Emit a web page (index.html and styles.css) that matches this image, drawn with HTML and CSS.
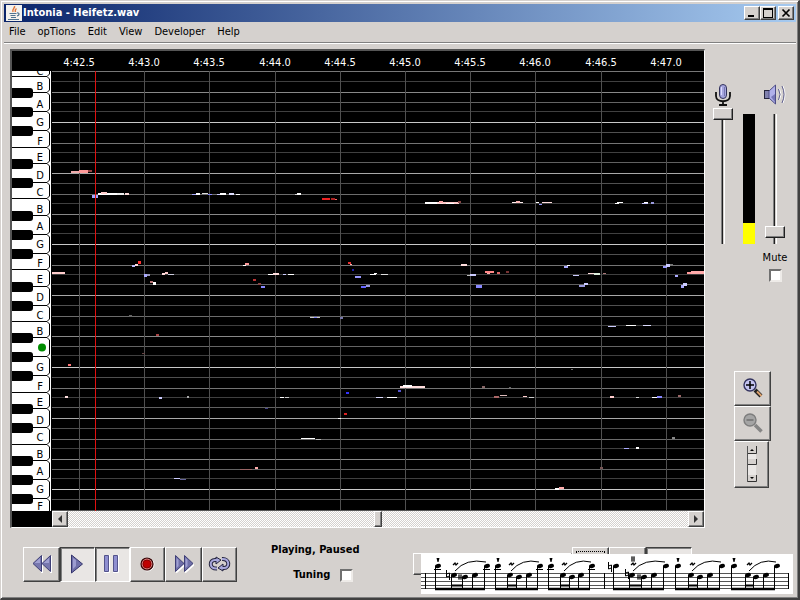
FILE: index.html
```
<!DOCTYPE html>
<html lang="en">
<head>
    <meta charset="UTF-8">
    <meta name="viewport" content="width=device-width, initial-scale=1.0">
    <title>Intonia - Heifetz.wav</title>
    <link rel="stylesheet" href="styles.css">
</head>
<body>
    <div class="window">
        <header class="titlebar">
            <svg class="app-icon" width="16" height="16" viewBox="0 0 16 16">
                <rect width="16" height="16" fill="#f4f2ee"/>
                <path d="M8.5 1c1 2-3 3-1.5 6M10.5 3.5c-2 1.5-1.5 2-1 3.5" fill="none" stroke="#e0763a" stroke-width="1.5"/>
                <path d="M3.5 8.5h7M4.5 10.5h5M11 8c3-.5 2.5 2.5 0 3M5 12.5h5M2 14.5h11" fill="none" stroke="#4f7390" stroke-width="1.2"/>
            </svg>
            <h1>Intonia - Heifetz.wav</h1>
            <div class="window-buttons">
                <button type="button" aria-label="Minimize"><svg width="12" height="10"><path d="M2 7h6v2h-6z"/></svg></button>
                <button type="button" aria-label="Maximize"><svg width="12" height="10"><path d="M1 0h10v10h-10zM2 2v7h8v-7z" fill-rule="evenodd"/></svg></button>
                <button type="button" class="close" aria-label="Close"><svg width="12" height="10"><path d="M2.5 1.5l7 7M9.5 1.5l-7 7" stroke="#000" stroke-width="1.7"/></svg></button>
            </div>
        </header>

        <nav class="menubar">
            <button type="button">File</button>
            <button type="button">opTions</button>
            <button type="button">Edit</button>
            <button type="button">View</button>
            <button type="button">Developer</button>
            <button type="button">Help</button>
        </nav>

        <main class="workspace">
            <section class="editor">
                <svg class="roll" id="roll" width="100%" height="460"></svg>
                <div class="scrollbar">
                    <button type="button" aria-label="Scroll left"><svg width="10" height="10"><path d="M7 1v8L3 5z" fill="#333"/></svg></button>
                    <input type="range" min="0" max="100" value="50" aria-label="Position">
                    <button type="button" aria-label="Scroll right"><svg width="10" height="10"><path d="M3 1v8l4-4z" fill="#333"/></svg></button>
                </div>
            </section>

            <aside class="side">
                <div class="levels">
                    <div class="level">
                        <svg width="18" height="22" viewBox="0 0 18 22">
                            <rect x="5.5" y="0.5" width="7" height="14" rx="3.5" fill="#a6a6de" stroke="#33335c"/>
                            <path d="M7.5 3v8" stroke="#dcdcff"/>
                            <path d="M10.5 3v9" stroke="#7575b0"/>
                            <path d="M2 8v4c0 7 14 7 14 0V8M9 17v4M5 21h8" fill="none" stroke="#111" stroke-width="1.8"/>
                        </svg>
                        <input type="range" min="0" max="100" value="100" aria-label="Microphone level">
                    </div>
                    <div class="meter"><div class="meter-fill" style="height: 16%"></div></div>
                    <div class="level">
                        <svg width="22" height="22" viewBox="0 0 22 22">
                            <rect x="0.5" y="6.5" width="5" height="8" fill="#8080ad" stroke="#24243c"/>
                            <path d="M5 7L11.5 1v19L5 14z" fill="#b0b0ea" stroke="#4d4d86"/>
                            <path d="M7 13l4 5V10z" fill="#7777b8"/>
                            <path d="M15.5 5q3 5.5 0 11M19 2q4 8.5 0 17" fill="none" stroke="#fff"/>
                            <path d="M14.5 5q3 5.5 0 11M18 2q4 8.5 0 17" fill="none" stroke="#60608f"/>
                        </svg>
                        <input type="range" min="0" max="100" value="5" aria-label="Playback volume">
                        <label for="mute">Mute</label>
                        <input type="checkbox" id="mute">
                    </div>
                </div>

                <div class="zoom">
                    <button type="button" aria-label="Zoom in">
                        <svg width="20" height="20" viewBox="0 0 20 20">
                            <path d="M12 12l6 6" stroke="#222" stroke-width="4"/>
                            <path d="M14 13.5l4.5 4.5" stroke="#dda26e" stroke-width="2"/>
                            <circle cx="7" cy="7" r="6" fill="#c4c4f0" stroke="#33335f" stroke-width="1.4"/>
                            <path d="M7 3v8M3 7h8" stroke="#000" stroke-width="1.5"/>
                        </svg>
                    </button>
                    <button type="button" aria-label="Zoom out" disabled>
                        <svg width="20" height="20" viewBox="0 0 20 20">
                            <path d="M12 12l6.5 6.5" stroke="#858585" stroke-width="3.5"/>
                            <circle cx="7" cy="7" r="6" fill="#a5a5a5" stroke="#7d7d7d" stroke-width="1.4"/>
                            <path d="M3.5 7h7" stroke="#707070" stroke-width="1.5"/>
                        </svg>
                    </button>
                    <button type="button" class="tall" aria-label="Show scrollbar">
                        <svg width="10" height="36" viewBox="0 0 10 36">
                            <rect x="1" width="8" height="36" fill="#eae7e5"/>
                            <path d="M.5 0v36" stroke="#555"/>
                            <path d="M1 0h8v7H1zM1 13h8v6H1zM1 29h8v7H1z" fill="#d6d2cf"/>
                            <path d="M1 7.5h8.5V0M1 18.5h8.5V13M1 35.5h8.5V29" fill="none" stroke="#333"/>
                            <path d="M3 5h4L5 3zM3 31h4l-2 2z"/>
                        </svg>
                    </button>
                </div>
            </aside>
        </main>

        <footer class="transport">
            <div class="buttons">
                <button type="button" class="wide" aria-label="Rewind">
                    <svg width="20" height="20" viewBox="0 0 20 20">
                        <path d="M10 2v17M19 2v17" stroke="#fff" stroke-width="2"/>
                        <path d="M9.5 1.5v16L1 9.5zM18.5 1.5v16L10 9.5z" fill="#7777ae" stroke="#3e3e76"/>
                        <path d="M2.5 9L8 4v5zM11.5 9L17 4v5z" fill="#a0a0d2"/>
                    </svg>
                </button>
                <button type="button" class="pressed" aria-label="Play">
                    <svg width="20" height="20" viewBox="0 0 20 20">
                        <path d="M3.5 1v18L14.5 10z" fill="#6f6fa8" stroke="#34346c"/>
                        <path d="M5 4v11l3-3V6z" fill="#9c9cd0"/>
                    </svg>
                </button>
                <button type="button" class="pressed" aria-label="Pause">
                    <svg width="20" height="20" viewBox="0 0 20 20">
                        <path d="M1.5 1.5h4v16h-4zM10.5 1.5h4v16h-4z" fill="#8f8fd0" stroke="#54548c"/>
                        <path d="M1 18.5h5.5V1M10 18.5h5.5V1" fill="none" stroke="#fff"/>
                    </svg>
                </button>
                <button type="button" aria-label="Record">
                    <svg width="20" height="20" viewBox="0 0 20 20">
                        <circle cx="9.5" cy="10.5" r="6.5" fill="none" stroke="#fff"/>
                        <circle cx="9" cy="10" r="6" fill="#d27878" stroke="#300" stroke-width="1.2"/>
                        <circle cx="9" cy="10" r="4" fill="#c00000" stroke="#8a0000"/>
                    </svg>
                </button>
                <button type="button" class="wide" aria-label="Fast forward">
                    <svg width="20" height="20" viewBox="0 0 20 20">
                        <path d="M2 18.5L11 10.5M11 18.5L20 10.5" stroke="#fff" stroke-width="2"/>
                        <path d="M1.5 1.5v16L10 9.5zM10.5 1.5v16L19 9.5z" fill="#6f6fa8" stroke="#3e3e76"/>
                        <path d="M2.5 4v10l2-2V6zM11.5 4v10l2-2V6z" fill="#a0a0d2"/>
                    </svg>
                </button>
                <button type="button" aria-label="Loop">
                    <svg width="24" height="20" viewBox="0 0 24 20">
                        <path d="M9 14.5C1 15 1 6 7 6h3M14 5c8-.5 8 9 2 9h-3" fill="none" stroke="#24243e" stroke-width="4"/>
                        <path d="M8 3l5 3-5 4zM15 10l-5 4 5 3z" fill="#a8a8dc" stroke="#24243e"/>
                        <path d="M9 14.5C1 15 1 6 7 6h3M14 5c8-.5 8 9 2 9h-3" fill="none" stroke="#a8a8dc" stroke-width="2"/>
                    </svg>
                </button>
            </div>

            <div class="status">
                <strong>Playing, Paused</strong>
                <div class="tuning">
                    <label for="tuning">Tuning</label>
                    <input type="checkbox" id="tuning">
                </div>
            </div>

            <div class="tools">
                <button type="button" class="long" aria-label="Tool"></button>
                <button type="button" class="focused" aria-label="Tool"></button>
                <button type="button" aria-label="Tool"></button>
                <button type="button" class="pressed" aria-label="Tool"></button>
                <svg class="score" id="score" viewBox="0 0 372 40" width="372" height="40"></svg>
            </div>
        </footer>
    </div>
    <script src="script.js"></script>
</body>
</html>
```
FILE: styles.css
```
* {
    box-sizing: border-box;
}

body {
    margin: 0;
    background: #d5d1ce;
    font-family: "DejaVu Sans Condensed", "DejaVu Sans", sans-serif;
    font-size: 11px;
    line-height: 14px;
    color: #000;
}

button {
    display: flex;
    align-items: center;
    justify-content: center;
    margin: 0;
    padding: 0;
    font: inherit;
    color: inherit;
    background: #d5d1ce;
    border: 1px solid;
    border-color: #fff #404040 #404040 #fff;
    box-shadow: inset -1px -1px #808080;
}

svg {
    display: block;
    flex: none;
}

.window {
    display: flex;
    flex-direction: column;
    min-height: 100vh;
    padding: 2px 1px 0;
    border: 1px solid;
    border-color: #d5d1ce #404040 #404040 #d5d1ce;
    border-bottom-width: 2px;
    border-right-width: 2px;
    box-shadow: inset 1px 1px #fff, inset -1px -1px #808080;
}

/* Title bar */
.titlebar {
    display: flex;
    align-items: center;
    height: 18px;
    margin: 1px 1px 0 2px;
    padding: 0 2px;
    background: linear-gradient(to right, #0a246a, #a6caf0);
}

.titlebar h1 {
    flex: 1;
    margin: 0 0 0 1px;
    font-size: 11px;
    font-weight: bold;
    color: #fff;
}

.window-buttons {
    display: flex;
}

.window-buttons button {
    width: 16px;
    height: 14px;
}

.window-buttons .close {
    margin-left: 2px;
}

/* Menu bar */
.menubar {
    display: flex;
    height: 22px;
    margin: 0 1px 0 2px;
    border-bottom: 1px solid #fff;
    box-shadow: inset 0 -1px #808080;
}

.menubar button {
    padding: 0 7px 1px 5px;
    background: none;
    border: none;
    box-shadow: none;
}

/* Pitch editor */
.workspace {
    display: flex;
    padding: 5px 0 0 8px;
}

.editor {
    flex: 1;
    min-width: 0;
    background: #000;
    border: 2px solid;
    border-color: #555 #fff #fff #555;
    border-right-width: 1px;
    border-bottom-width: 1px;
}

.roll text {
    font-size: 11px;
    text-anchor: middle;
}

.roll .time {
    fill: #fff;
}

.scrollbar {
    display: flex;
    height: 16px;
    margin-left: 40px;
}

.scrollbar button {
    width: 16px;
}

.scrollbar input {
    flex: 1;
    min-width: 0;
    height: 16px;
    margin: 0;
    appearance: none;
    background: repeating-conic-gradient(#fff 0 25%, #d5d1ce 0 50%) 0 0 / 2px 2px;
}

.scrollbar input::-webkit-slider-thumb {
    appearance: none;
    width: 8px;
    height: 16px;
    background: #d5d1ce;
    border: 1px solid;
    border-color: #fff #404040 #404040 #fff;
    box-shadow: inset -1px -1px #808080;
}

/* Level controls */
.side {
    width: 92px;
    padding: 35px 0 0 7px;
}

.levels {
    display: flex;
    gap: 9px;
}

.level {
    display: flex;
    flex-direction: column;
    align-items: center;
    width: 22px;
}

.level input[type="range"] {
    appearance: none;
    writing-mode: vertical-lr;
    direction: rtl;
    width: 22px;
    height: 136px;
    margin: 2px 0 7px;
    background: linear-gradient(to right, #808080 1px, #202020 1px 2px, #d5d1ce 2px 3px, #fff 3px) bottom / 4px 130px no-repeat;
}

.level input[type="range"]::-webkit-slider-thumb {
    appearance: none;
    width: 20px;
    height: 12px;
    background: #d5d1ce;
    border: 1px solid;
    border-color: #fff #202020 #202020 #fff;
    box-shadow: inset -1px -1px #808080;
}

input[type="checkbox"] {
    appearance: none;
    width: 13px;
    height: 13px;
    margin: 0;
    background: #fff;
    border: 2px solid;
    border-color: #707070 #eeebe8 #eeebe8 #707070;
}

.level label {
    margin-bottom: 4px;
}

.meter {
    display: flex;
    align-items: flex-end;
    width: 12px;
    height: 130px;
    margin-top: 30px;
    background: #000;
}

.meter-fill {
    width: 100%;
    background: #ff0;
}

.zoom {
    display: flex;
    flex-direction: column;
    align-items: flex-start;
    margin: 89px 0 0 22px;
}

.zoom button {
    width: 37px;
    height: 35px;
    padding-bottom: 2px;
}

.zoom .tall {
    width: 35px;
    height: 47px;
}

/* Transport */
.transport {
    display: flex;
    padding: 19px 4px 16px 21px;
}

.buttons {
    display: flex;
}

.buttons button {
    width: 35px;
    height: 35px;
    padding-bottom: 2px;
}

.buttons .wide {
    width: 37px;
}

.buttons .pressed,
.tools .pressed {
    background: #e9e6e4;
    border-color: #404040 #fff #fff #404040;
    box-shadow: inset 1px 1px #808080;
}

.status {
    display: flex;
    flex-direction: column;
    align-items: center;
    gap: 11px;
    margin: -4px 0 0 34px;
    font-weight: bold;
}

.tuning {
    display: flex;
    align-items: center;
    gap: 10px;
    padding-left: 16px;
}

.tools {
    position: relative;
    display: flex;
    align-items: flex-start;
    margin-left: auto;
    padding-right: 101px;
}

.tools button {
    width: 37px;
    height: 28px;
}

.tools .long {
    width: 159px;
    height: 22px;
    margin-top: 6px;
}

.tools .pressed {
    width: 46px;
}

.tools .focused {
    outline: 1px dotted #000;
    outline-offset: -5px;
}

/* The score floats over the tool buttons */
.score {
    position: absolute;
    right: 0;
    top: 7px;
    background: #fff;
}
```
FILE: script.js
```
const NS = 'http://www.w3.org/2000/svg';

function add(parent, tag, attrs, text) {
    const el = document.createElementNS(NS, tag);
    for (const key in attrs) el.setAttribute(key, attrs[key]);
    if (text) el.textContent = text;
    parent.appendChild(el);
    return el;
}

const TOP = 20;
const LEFT = 40;
const roll = document.getElementById('roll');

// semitone lines, one octave repeats every 122 or 123 px
const steps = [
    [0, '#c8c8c8'], [10, '#505050'], [21, '#747474'], [30, '#404040'],
    [40, '#606060'], [51, '#a8a8a8'], [61, '#505050'], [72, '#6c6c6c'],
    [81, '#404040'], [92, '#888'], [102, '#646464'], [111, '#404040']
];
[-51, 71, 193, 316, 438].forEach(base => {
    steps.forEach(([dy, color]) => {
        const y = base + dy;
        if (y <= TOP + 1 || y >= 458) return;
        add(roll, 'rect', { x: LEFT, y: y, width: '100%', height: 1, fill: color });
    });
});
add(roll, 'rect', { x: LEFT, y: TOP, width: '100%', height: 1, fill: '#777' });
add(roll, 'rect', { x: LEFT, y: 459, width: '100%', height: 1, fill: '#555' });

// time grid
['4:42.5', '4:43.0', '4:43.5', '4:44.0', '4:44.5', '4:45.0', '4:45.5', '4:46.0', '4:46.5', '4:47.0'].forEach((label, i) => {
    const x = Math.round(67 + i * 65.2);
    add(roll, 'rect', { x: x, y: TOP, width: 1, height: 440, fill: '#505050' });
    add(roll, 'text', { x: x, y: 15, class: 'time' }, label);
});

// detected pitches: x, y, width, height, colour
const notes = [
    [59, 120, 9, 2, '#eaa'], [67, 119, 9, 3, '#f99'], [76, 119, 4, 2, '#944'],
    [80, 144, 6, 3, '#a4a4ff'], [86, 142, 19, 2, '#fff'], [89, 141, 6, 2, '#fcc'], [105, 142, 7, 2, '#eee'], [113, 142, 4, 2, '#fdd'],
    [180, 143, 5, 1, '#aaf'], [184, 142, 4, 2, '#fff'], [190, 142, 6, 1, '#ddd'], [196, 143, 4, 1, '#88f'], [205, 143, 5, 1, '#ccf'], [208, 142, 6, 2, '#fff'], [217, 142, 5, 2, '#ddf'], [224, 143, 4, 1, '#fff'],
    [283, 143, 3, 1, '#ccc'], [285, 142, 4, 2, '#fff'],
    [310, 147, 8, 2, '#e22'], [319, 147, 4, 2, '#a22'], [323, 148, 2, 1, '#f66'],
    [413, 151, 12, 2, '#fff'], [425, 151, 6, 2, '#fdd'], [427, 150, 4, 2, '#faa'], [431, 151, 16, 2, '#fcc'], [434, 152, 8, 1, '#fff'], [446, 150, 3, 2, '#844'],
    [500, 151, 11, 1, '#fee'], [504, 150, 4, 2, '#fbb'], [524, 151, 3, 1, '#fff'], [527, 153, 3, 1, '#99f'], [530, 151, 10, 1, '#fdd'],
    [603, 152, 4, 1, '#fff'], [605, 151, 6, 1, '#fff'], [630, 152, 6, 1, '#ccf'], [632, 151, 4, 1, '#fff'], [639, 151, 3, 2, '#99d'],
    [40, 221, 13, 2, '#fcc'], [120, 214, 3, 2, '#bbf'], [123, 213, 3, 2, '#fdd'], [126, 210, 3, 3, '#f33'],
    [132, 223, 3, 3, '#aaf'], [135, 223, 3, 2, '#99b'], [138, 230, 3, 2, '#b77'], [141, 231, 3, 3, '#fff'],
    [150, 222, 3, 2, '#fdd'], [153, 221, 3, 2, '#fcc'], [156, 223, 6, 1, '#ccd'],
    [231, 214, 3, 1, '#fff'], [233, 212, 4, 2, '#f99'], [241, 228, 3, 2, '#b33'], [246, 232, 3, 2, '#844'], [249, 235, 4, 2, '#88f'],
    [256, 223, 6, 1, '#fff'], [261, 222, 6, 2, '#fdd'], [271, 223, 3, 1, '#ccf'], [276, 223, 6, 1, '#fff'],
    [336, 211, 3, 2, '#e33'], [338, 213, 2, 1, '#faa'], [340, 218, 2, 2, '#22a'], [343, 225, 6, 2, '#99f'], [349, 235, 5, 2, '#66f'], [354, 234, 4, 2, '#99d'],
    [358, 223, 6, 1, '#fff'], [362, 222, 3, 1, '#fff'], [369, 223, 7, 1, '#ddd'],
    [449, 213, 6, 2, '#fdd'], [455, 224, 5, 1, '#bbb'], [458, 223, 6, 2, '#ccf'], [464, 234, 6, 3, '#88f'],
    [473, 220, 9, 2, '#f88'], [475, 222, 3, 1, '#faa'], [485, 221, 3, 2, '#d66'], [494, 220, 3, 2, '#733'],
    [552, 215, 4, 2, '#aaf'], [555, 214, 3, 1, '#fff'], [561, 224, 6, 1, '#ccf'], [576, 222, 6, 1, '#fdd'], [582, 222, 6, 2, '#ded'], [591, 222, 3, 1, '#a77'],
    [567, 234, 6, 2, '#99d'], [572, 232, 4, 2, '#ccf'],
    [651, 215, 4, 2, '#99f'], [654, 213, 4, 3, '#ccf'], [658, 213, 3, 1, '#777'], [663, 224, 3, 2, '#aaf'], [669, 234, 3, 3, '#aaf'], [671, 232, 4, 3, '#ccf'],
    [675, 221, 12, 2, '#f99'], [679, 220, 13, 3, '#faa'],
    [117, 264, 3, 2, '#666'], [144, 283, 3, 2, '#a44'], [130, 302, 3, 1, '#644'], [56, 313, 3, 2, '#f77'],
    [298, 266, 10, 1, '#ccc'], [302, 266, 3, 1, '#88f'], [328, 266, 3, 2, '#77a'],
    [596, 275, 8, 1, '#ccf'], [614, 274, 10, 1, '#fff'], [631, 274, 8, 1, '#ddf'],
    [53, 345, 3, 2, '#fdd'], [147, 346, 3, 2, '#ccf'], [175, 345, 2, 2, '#aaa'], [268, 346, 4, 1, '#fff'], [273, 346, 4, 1, '#ccc'],
    [364, 346, 7, 1, '#ddf'], [375, 346, 10, 1, '#fff'], [334, 341, 3, 2, '#33f'], [386, 339, 3, 2, '#55c'],
    [388, 335, 25, 2, '#fdd'], [391, 334, 9, 2, '#fff'], [470, 335, 3, 2, '#866'], [497, 336, 2, 1, '#666'], [559, 318, 2, 1, '#666'],
    [482, 345, 5, 2, '#a66'], [488, 344, 7, 1, '#dbb'], [511, 345, 4, 1, '#fcc'], [517, 346, 5, 1, '#ccc'],
    [598, 345, 4, 2, '#fcc'], [624, 346, 3, 1, '#ddd'], [640, 346, 5, 1, '#fff'], [645, 345, 5, 2, '#88f'], [666, 344, 3, 2, '#966'],
    [253, 357, 3, 1, '#448'], [332, 362, 3, 2, '#d22'], [326, 367, 3, 1, '#fff'],
    [289, 387, 14, 1, '#fff'], [304, 388, 5, 1, '#bbb'], [660, 386, 3, 2, '#888'], [612, 397, 5, 1, '#aaf'], [624, 396, 3, 2, '#fff'],
    [162, 427, 6, 1, '#ccf'], [168, 428, 6, 1, '#669'], [228, 418, 12, 1, '#966'], [243, 416, 3, 2, '#faa'],
    [543, 437, 4, 2, '#fff'], [547, 436, 5, 2, '#faa'], [588, 416, 3, 2, '#755']
];
notes.forEach(([x, y, w, h, color]) => {
    add(roll, 'rect', { x: x, y: y, width: w, height: h, fill: color });
});

// playback cursor
add(roll, 'rect', { x: 83, y: TOP, width: 1, height: 440, fill: '#e01010' });

// piano keyboard: bottom edge of each white key, label, black key on that edge
const keys = [
    [25, 'C', 0], [41, 'B', 1], [60, 'A', 1], [79, 'G', 1], [96, 'F', 0], [112, 'E', 1], [131, 'D', 1], [147, 'C', 0],
    [164, 'B', 1], [183, 'A', 1], [202, 'G', 1], [218, 'F', 0], [235, 'E', 1], [254, 'D', 1], [270, 'C', 0],
    [286, 'B', 1], [305, '', 1], [324, 'G', 1], [341, 'F', 0], [357, 'E', 1], [376, 'D', 1], [393, 'C', 0],
    [409, 'B', 1], [428, 'A', 1], [447, 'G', 1], [464, 'F', 0]
];
const labelY = [
    20, 35, 53, 71, 90, 106, 124, 141, 158, 175, 193, 212, 228, 246, 264,
    280, 296, 316, 335, 351, 369, 386, 403, 420, 438, 455
];
add(roll, 'rect', { x: 0, y: TOP, width: 39, height: 440, fill: '#fff' });
let above = 6;
keys.forEach(([edge, label], i) => {
    add(roll, 'path', {
        d: `M0 ${above + .5}H35L37.5 ${above + 3}V${edge - 2}L35 ${edge + .5}H0`,
        fill: '#fff', stroke: '#000'
    });
    if (label) add(roll, 'text', { x: 28, y: labelY[i] + 4 }, label);
    above = edge;
});
keys.forEach(([edge, label, black]) => {
    if (black) add(roll, 'rect', { x: -4, y: edge - 4, width: 25, height: 10, rx: 3, fill: '#000' });
});
add(roll, 'circle', { cx: 30, cy: 296.5, r: 4, fill: '#008c00' });
add(roll, 'rect', { x: 0, y: 0, width: 40, height: TOP, fill: '#000' });

// score strip
const score = document.getElementById('score');
[19, 23, 27, 31, 34].forEach(y => add(score, 'rect', { x: 0, y: y, width: 367, height: 1, fill: '#555' }));
[4, 183, 367].forEach(x => add(score, 'rect', { x: x, y: 19, width: 1, height: 16, fill: '#000' }));

const groups = [
    [17, 33, 44, 54, 66], [77, 89, 98, 108, 119], [130, 142, 151, 160, 171],
    [195, 211, 223, 233, 245], [257, 270, 279, 289, 301], [313, 327, 335, 345, 356]
];
const heads = [12, 21, 23, 21, 12];
groups.forEach((xs, g) => {
    xs.forEach((x, i) => {
        add(score, 'ellipse', { cx: x, cy: heads[i], rx: 3, ry: 2, transform: `rotate(-15 ${x} ${heads[i]})` });
        add(score, 'path', { d: `M${x - 2.5} ${heads[i]}V35`, stroke: '#000' });
    });
    if (g < 3) [xs[0], xs[4]].forEach(x => add(score, 'path', { d: `M${x - 4} 15.5h7`, stroke: '#000' }));
    add(score, 'path', { d: `M${xs[0] - 3} 35h${xs[4] - xs[0] + 1}`, stroke: '#000', 'stroke-width': 2.5 });
    add(score, 'path', { d: `M${xs[1] - 3} 31.5h${xs[2] - xs[1] + 1}`, stroke: '#000', 'stroke-width': 2 });
    add(score, 'path', { d: `M${xs[1] + 1} 17Q${xs[1] + 12} 4 ${xs[4] - 1} 8`, fill: 'none', stroke: '#000' });
    add(score, 'path', { d: `M${xs[1] - 1} 11l2-2 1 2 2-2`, fill: 'none', stroke: '#000', 'stroke-width': 1.3 });
    if (g !== 3) add(score, 'path', { d: `M${xs[0] - 1.5} 4h3l-1 4h-1z` });
});

// accidentals
[[27, 21], [189, 13], [206, 20]].forEach(([x, y]) => {
    add(score, 'path', { d: `M${x - 1.5} ${y - 5}v7l3-1M${x + 1.5} ${y + 5}v-7l-3 1`, fill: 'none', stroke: '#000' });
});
[[39, 23], [218, 23], [212, 5]].forEach(([x, y]) => {
    add(score, 'path', { d: `M${x - 1} ${y - 3}v6M${x + 1} ${y - 3}v6M${x - 2} ${y - 1}h4M${x - 2} ${y + 1}h4`, fill: 'none', stroke: '#000', 'stroke-width': .8 });
});
```
